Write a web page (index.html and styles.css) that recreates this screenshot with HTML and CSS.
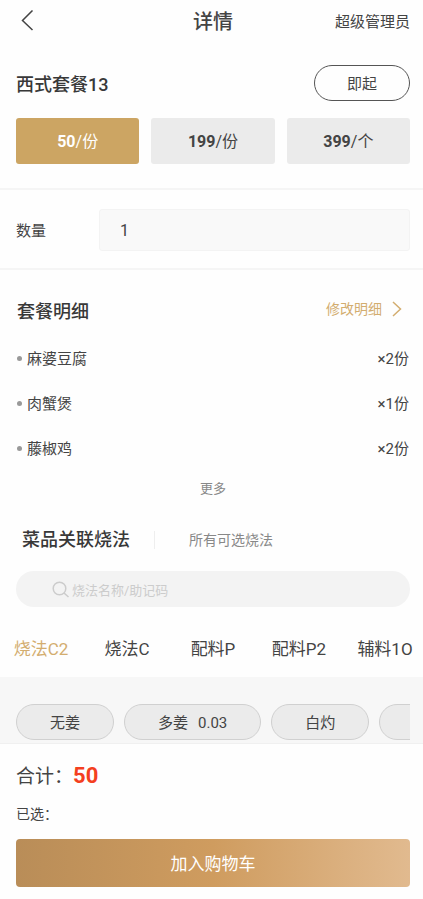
FILE: index.html
```html
<!DOCTYPE html>
<html lang="zh-CN">
<head>
<meta charset="utf-8">
<meta name="viewport" content="width=device-width, initial-scale=1">
<title>详情</title>
<link rel="stylesheet" href="styles.css">
</head>
<body>
<header class="topbar">
  <button class="back" type="button" aria-label="返回">
    <svg width="14" height="22" viewBox="0 0 14 22"><path d="M12.5 .5 2.5 10.5l10 9.5"/></svg>
  </button>
  <h1 class="topbar-title">详情</h1>
  <span class="user">超级管理员</span>
</header>

<main class="content">
  <section class="product">
    <div class="product-head">
      <h2 class="product-name">西式套餐13</h2>
      <button class="serve" type="button">即起</button>
    </div>
    <div class="prices">
      <button class="price price-active" type="button"><b>50</b>/份</button>
      <button class="price" type="button"><b>199</b>/份</button>
      <button class="price" type="button"><b>399</b>/个</button>
    </div>
  </section>

  <section class="quantity">
    <label for="qty">数量</label>
    <input class="qty-input" id="qty" type="text" inputmode="numeric" value="1">
  </section>

  <section class="combo">
    <div class="combo-head">
      <h2 class="combo-title">套餐明细</h2>
      <a class="edit" href="#edit">修改明细
        <svg width="10" height="16" viewBox="0 0 10 16"><path d="M1 1 8.5 8 1 15"/></svg>
      </a>
    </div>
    <ul class="dishes">
      <li class="dish"><span class="dish-name">麻婆豆腐</span><span>×2份</span></li>
      <li class="dish"><span class="dish-name">肉蟹煲</span><span>×1份</span></li>
      <li class="dish"><span class="dish-name">藤椒鸡</span><span>×2份</span></li>
    </ul>
    <button class="more" type="button">更多</button>
  </section>

  <section class="methods">
    <div class="scopes">
      <button class="scope scope-active" type="button">菜品关联烧法</button>
      <button class="scope" type="button">所有可选烧法</button>
    </div>
    <div class="search">
      <svg width="18" height="18" viewBox="0 0 18 18"><circle cx="7.5" cy="7.5" r="6.3"/><path d="m12 12 4.5 4"/></svg>
      <input class="search-input" type="search" placeholder="烧法名称/助记码" aria-label="烧法名称/助记码">
    </div>
    <nav class="groups">
      <a class="group group-active" href="#c2">烧法C2</a>
      <a class="group" href="#c">烧法C</a>
      <a class="group" href="#p">配料P</a>
      <a class="group" href="#p2">配料P2</a>
      <a class="group" href="#f10">辅料1O</a>
    </nav>
  </section>

  <section class="options">
    <div class="chips">
      <button class="chip" type="button">无姜</button>
      <button class="chip" type="button">多姜<span class="chip-price">0.03</span></button>
      <button class="chip" type="button">白灼</button>
      <button class="chip" type="button" aria-label="其他"></button>
    </div>
  </section>
</main>

<footer class="checkout">
  <p class="total">合计：<strong class="total-value">50</strong></p>
  <p class="selected">已选：</p>
  <button class="add" type="button">加入购物车</button>
</footer>
</body>
</html>
```
FILE: styles.css
```css
* {
  box-sizing: border-box;
}

body {
  margin: 0;
  min-height: 100vh;
  display: flex;
  flex-direction: column;
  background: #fefefe;
  color: #444;
  font-family: Roboto, "Noto Sans CJK SC", sans-serif;
  font-size: 15px;
  line-height: 24px;
}

h1, h2, p, ul {
  margin: 0;
  padding: 0;
}

button, input {
  margin: 0;
  padding: 0;
  border: 0;
  background: none;
  color: inherit;
  font: inherit;
}

a {
  color: inherit;
  text-decoration: none;
}

svg {
  display: block;
  flex: none;
  fill: none;
  stroke: currentColor;
  stroke-width: 1.5;
}

.topbar {
  display: grid;
  grid-template-columns: 1fr auto 1fr;
  align-items: center;
  height: 42px;
  padding: 0 13px 0 16px;
}

.back {
  justify-self: start;
  padding: 0 4px;
}

.topbar-title {
  padding-top: 2px;
  font-size: 20px;
  font-weight: 500;
}

.user {
  justify-self: end;
  padding-top: 2px;
}

.product {
  padding: 23px 13px 24px 16px;
  border-bottom: 2px solid #f5f5f5;
}

.product-head {
  display: flex;
  align-items: center;
  justify-content: space-between;
}

.product-name {
  padding-top: 4px;
  font-size: 18px;
  font-weight: 500;
  color: #383838;
}

.serve {
  width: 96px;
  height: 36px;
  padding-top: 2px;
  border: 1px solid #555;
  border-radius: 18px;
}

.prices {
  display: grid;
  grid-template-columns: repeat(3, 1fr);
  gap: 12px;
  margin-top: 17px;
}

.price {
  height: 46px;
  padding-top: 2px;
  border-radius: 3px;
  background: #ebebeb;
  font-size: 16px;
}

.price b {
  font-weight: 700;
}

.price-active {
  background: #cca563;
  color: #fff;
}

.quantity {
  display: flex;
  align-items: center;
  padding: 19px 13px 17px 16px;
  border-bottom: 2px solid #f5f5f5;
}

.quantity label {
  width: 83px;
  padding-top: 2px;
}

.qty-input {
  flex: 1;
  min-width: 0;
  height: 42px;
  padding: 0 20px;
  border: 1px solid #f3f3f3;
  border-radius: 3px;
  background: #f9f9f9;
  font-size: 16px;
}

.combo {
  padding: 30px 14px 0 17px;
}

.combo-head {
  display: flex;
  align-items: center;
  justify-content: space-between;
  height: 24px;
}

.combo-title {
  font-size: 18px;
  font-weight: 500;
  color: #383838;
}

.edit {
  display: flex;
  align-items: center;
  gap: 10px;
  padding: 0 7px 6px 0;
  font-size: 14px;
  color: #d3ad6f;
}

.dishes {
  margin-top: 12px;
  list-style: none;
}

.dish {
  display: flex;
  align-items: center;
  justify-content: space-between;
  height: 45px;
}

.dish-name {
  display: flex;
  align-items: center;
  gap: 5px;
}

.dish-name::before {
  content: "";
  width: 5px;
  height: 5px;
  border-radius: 50%;
  background: #999;
}

.more {
  display: block;
  width: 100%;
  margin-top: 6px;
  font-size: 13px;
  color: #888;
}

.methods {
  overflow: hidden;
}

.scopes {
  display: flex;
  align-items: center;
  height: 36px;
  margin-top: 21px;
  padding-left: 22px;
}

.scope {
  padding-left: 34px;
  font-size: 14px;
  color: #888;
}

.scope-active {
  padding: 0 24px 0 0;
  border-right: 1px solid #eee;
  line-height: 18px;
  font-size: 18px;
  font-weight: 500;
  color: #383838;
}

.search {
  display: flex;
  align-items: center;
  gap: 2px;
  height: 36px;
  margin: 13px 13px 0 16px;
  padding: 2px 36px 0;
  border-radius: 18px;
  background: #f3f3f3;
  color: #ccc;
}

.search-input {
  flex: 1;
  min-width: 0;
  padding-top: 2px;
  font-size: 13px;
  color: #444;
  outline: none;
}

.search-input::placeholder {
  color: #ccc;
}

/* The strip runs slightly past both edges of the screen. */
.groups {
  display: grid;
  grid-template-columns: repeat(5, 1fr);
  margin: 30px -5px 0 -2px;
  padding-bottom: 16px;
  font-size: 17px;
  text-align: center;
  white-space: nowrap;
}

.group-active {
  color: #d3ad6f;
}

.options {
  padding: 27px 13px 3px 16px;
  background: #f7f7f7;
}

.chips {
  display: flex;
  gap: 10px;
  overflow: hidden;
}

.chip {
  flex: none;
  min-width: 98px;
  height: 36px;
  padding: 2px 33px 0;
  border: 1px solid #d0d0d0;
  border-radius: 18px;
  background: #ebebeb;
}

.chip-price {
  margin-left: 10px;
}

.checkout {
  margin-top: auto;
  padding: 20px 13px 12px 16px;
  border-top: 1px solid #f0f0f0;
  background: #fefefe;
}

.total {
  font-size: 19px;
}

.total-value {
  font-size: 22px;
  font-weight: 700;
  color: #f43f20;
}

.selected {
  margin-top: 13px;
  font-size: 14px;
}

.add {
  display: block;
  width: 100%;
  height: 48px;
  margin-top: 13px;
  padding-top: 2px;
  border-radius: 4px;
  background: linear-gradient(90deg, #b98d58, #cf9c5f 50%, #e1ba8f);
  color: #fff;
  font-size: 17px;
}
```
